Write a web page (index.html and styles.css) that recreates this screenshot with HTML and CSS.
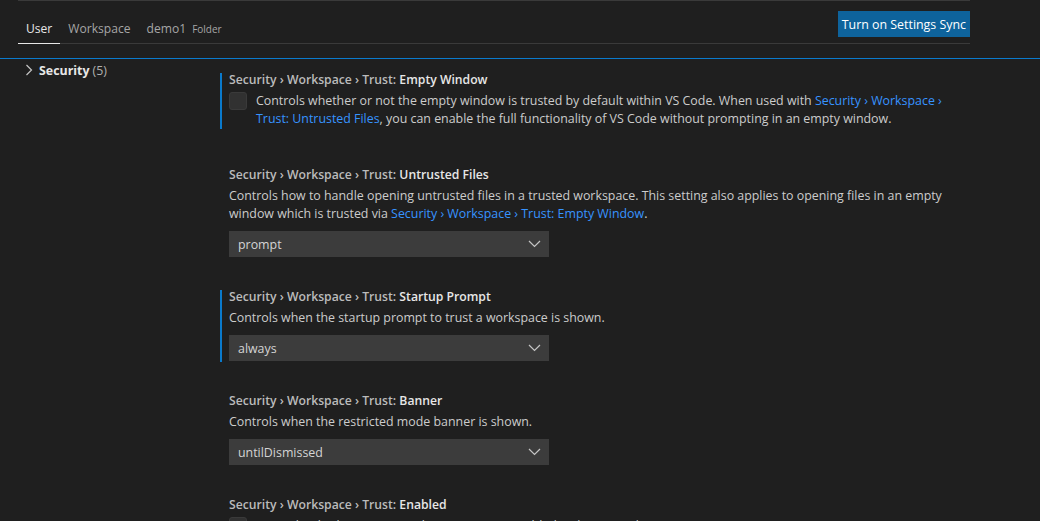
FILE: index.html
```html
<!DOCTYPE html>
<html>
<head>
<meta charset="utf-8">
<link rel="stylesheet" href="styles.css">
</head>
<body>
<div class="header">
  <div class="tabs-row">
    <div class="tabs">
      <div class="tab active">User</div>
      <div class="tab">Workspace</div>
      <div class="tab">demo1<span class="folder">Folder</span></div>
    </div>
    <button class="sync">Turn on Settings Sync</button>
  </div>
</div>
<div class="body">
  <div class="tree">
    <div class="tree-row">
      <svg class="tree-chev" width="16" height="16" viewBox="0 0 16 16"><path d="M5.5 3 L10.5 8 L5.5 13" fill="none" stroke="#c5c5c5" stroke-width="1.2"/></svg>
      <span class="tree-label">Security</span><span class="tree-count">(5)</span>
    </div>
  </div>
  <div class="list">
    <div class="item focused bool">
      <div class="title"><span class="cat">Security › Workspace › Trust: </span><span class="label">Empty Window</span></div>
      <div class="bool-row">
        <div class="checkbox"></div>
        <div class="desc">Controls whether or not the empty window is trusted by default within VS Code. When used with <span class="link">Security › Workspace › Trust: Untrusted Files</span>, you can enable the full functionality of VS Code without prompting in an empty window.</div>
      </div>
    </div>
    <div class="item">
      <div class="title"><span class="cat">Security › Workspace › Trust: </span><span class="label">Untrusted Files</span></div>
      <div class="desc">Controls how to handle opening untrusted files in a trusted workspace. This setting also applies to opening files in an empty window which is trusted via <span class="link">Security › Workspace › Trust: Empty Window</span>.</div>
      <div class="select"><span>prompt</span><svg width="16" height="16" viewBox="0 0 16 16"><path d="M2 5 L7.5 10.5 L13 5" fill="none" stroke="#c5c5c5" stroke-width="1.2"/></svg></div>
    </div>
    <div class="item focused">
      <div class="title"><span class="cat">Security › Workspace › Trust: </span><span class="label">Startup Prompt</span></div>
      <div class="desc">Controls when the startup prompt to trust a workspace is shown.</div>
      <div class="select"><span>always</span><svg width="16" height="16" viewBox="0 0 16 16"><path d="M2 5 L7.5 10.5 L13 5" fill="none" stroke="#c5c5c5" stroke-width="1.2"/></svg></div>
    </div>
    <div class="item">
      <div class="title"><span class="cat">Security › Workspace › Trust: </span><span class="label">Banner</span></div>
      <div class="desc">Controls when the restricted mode banner is shown.</div>
      <div class="select"><span>untilDismissed</span><svg width="16" height="16" viewBox="0 0 16 16"><path d="M2 5 L7.5 10.5 L13 5" fill="none" stroke="#c5c5c5" stroke-width="1.2"/></svg></div>
    </div>
    <div class="item bool">
      <div class="title"><span class="cat">Security › Workspace › Trust: </span><span class="label">Enabled</span></div>
      <div class="bool-row">
        <div class="checkbox"></div>
        <div class="desc">Controls whether or not Workspace Trust is enabled within VS Code.</div>
      </div>
    </div>
  </div>
</div>
</body>
</html>
```

FILE: styles.css
```css
html, body {
  margin: 0;
  padding: 0;
  height: 521px;
  overflow: hidden;
  background: #1f1f1f;
  font-family: "Open Sans", "Noto Sans", sans-serif;
  font-size: 12.4px;
  color: #cccccc;
}

.header {
  margin: 0 70px 14px 18px;
  border-top: 1px solid #3a3a3a;
}

.tabs-row {
  display: flex;
  justify-content: space-between;
  height: 42px;
  border-bottom: 1px solid #3a3a3a;
}

.tabs {
  display: flex;
  align-items: flex-end;
}

.tab {
  padding: 0 8px 5px;
  line-height: 18px;
  font-size: 12.1px;
  color: #a6a6a6;
  margin-bottom: -1px;
  border-bottom: 1px solid transparent;
  display: flex;
  align-items: baseline;
}

.tab.active {
  color: #e7e7e7;
  border-bottom-color: #e7e7e7;
}

.folder {
  font-size: 10px;
  margin-left: 6px;
  color: #a6a6a6;
}

.sync {
  align-self: flex-start;
  margin-top: 10px;
  height: 26px;
  padding: 0 4px;
  border: none;
  background: #0e639c;
  color: #ffffff;
  font-family: inherit;
  font-size: 12.4px;
}

.body {
  border-top: 1px solid #0a7acc;
  display: flex;
  padding-left: 18px;
}

.tree {
  width: 202px;
  flex: none;
}

.tree-row {
  display: flex;
  align-items: center;
  height: 22px;
  padding-left: 3px;
}

.tree-chev {
  margin-right: 2px;
}

.tree-label {
  font-weight: 700;
  color: #e7e7e7;
}

.tree-count {
  margin-left: 3px;
  color: #b0b0b0;
}

.list {
  width: 740px;
  padding-top: 14px;
}

.item {
  border-left: 2px solid transparent;
  padding: 0 0 1px 7px;
  margin-bottom: 32px;
}

.item.bool {
  margin-bottom: 39px;
}

.item.focused {
  border-left-color: #0a7acc;
}

.title {
  padding-top: 1px;
  line-height: 12px;
  font-size: 12.2px;
  font-weight: 600;
  white-space: nowrap;
}

.cat {
  color: #bbbbbb;
}

.label {
  color: #e7e7e7;
}

.desc {
  margin-top: 6px;
  line-height: 18px;
  color: #cccccc;
}

.link {
  color: #3794ff;
}

.bool-row {
  display: flex;
  align-items: flex-start;
  gap: 9px;
}

.bool-row .checkbox {
  margin-top: 6px;
  width: 16px;
  height: 16px;
  flex: none;
  background: #313131;
  border: 1px solid #3a3a3a;
  border-radius: 3px;
}

.select {
  margin-top: 8px;
  width: 320px;
  height: 26px;
  box-sizing: border-box;
  background: #3c3c3c;
  display: flex;
  align-items: center;
  justify-content: space-between;
  padding: 0 6px 0 9px;
  color: #d4d4d4;
}
```
